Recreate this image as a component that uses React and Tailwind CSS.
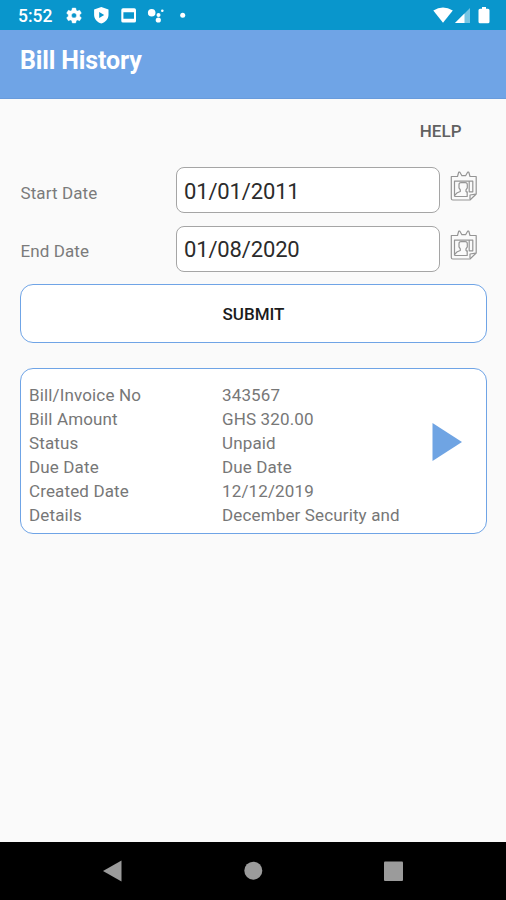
import React from "react";

function StatusIcons() {
  return (
    <svg className="ml-[14px] h-[30px] w-[124px]" viewBox="66 0 124 30" fill="white">
      <path
        fillRule="evenodd"
        d="M72.3 8h3.4l.5 2.2 1.3.8 2.2-.7 1.7 2.900-1.700 1.500v1.600l1.700 1.500-1.700 2.900-2.200-.7-1.300.8-.5 2.200h-3.400l-.5-2.200-1.300-.8-2.200.7-1.700-2.900 1.700-1.500v-1.600l-1.700-1.500 1.700-2.900 2.200.7 1.300-.8zM74 12.900a2.500 2.500 0 1 0 0 5 2.500 2.500 0 0 0 0-5z"
        stroke="white"
        strokeWidth=".4"
      />
      <path fillRule="evenodd" d="M101.300 7l7.200 2.600v5.100c0 4-3 7.500-7.200 8.800-4.200-1.300-7.200-4.800-7.200-8.800V9.600zM99.200 12v6l5-3z" />
      <path fillRule="evenodd" d="M123 8.200h11.300q1.700 0 1.700 1.700v11q0 1.700-1.700 1.700H123q-1.700 0-1.700-1.700v-11q0-1.700 1.700-1.700zM123.400 12.200v6.600H134V12.200z" />
      <circle cx="151.700" cy="12.800" r="3.800" />
      <circle cx="158.500" cy="15" r="2" />
      <circle cx="158.300" cy="20" r="2.600" />
      <circle cx="162.300" cy="10.700" r="1.300" />
      <circle cx="182.700" cy="15.300" r="2.500" />
    </svg>
  );
}

function SignalIcons() {
  return (
    <svg className="ml-auto h-[30px] w-[74px]" viewBox="432 0 74 30" fill="white">
      <path d="M433.300 10.500Q443 4.500 452.800 10.500L443 22.700z" />
      <path d="M470 8v15h-15z" opacity=".45" />
      <path d="M464.500 13.500V23H455z" />
      <path d="M482 7h4v1.800h2q1.500 0 1.500 1.500v11.400q0 1.500-1.500 1.500h-8q-1.500 0-1.500-1.500V10.300q0-1.500 1.500-1.500h2z" />
    </svg>
  );
}

function CalendarIcon() {
  return (
    <svg className="mt-[4px] ml-[9px] h-[32px] w-[30px]" viewBox="449 171 30 32" fill="none" stroke="#959595" strokeWidth="1.200" strokeLinejoin="round">
      <path d="M451.300 176.500h6.200l1.200-4.300h1.200l2 3.500h3.700l2-3.500h1.200l1.200 4.300h6.200v17.500l-6.200 6h-17.200q-1.500 0-1.500-1.500z" />
      <path d="M454.500 196.500v-15.300h18.300v10.600h-3.600v-10.600M454.500 196.500h12.700v-5" />
      <path d="M454.500 195.500l2.800-2.800 3-1.200v-1.600l-1.300-2v-3.200q0-2 2-2h4.300q2 0 2 2v3.200l-1.300 2v1.600l1.200.8" />
      <path d="M470 199.300v-4.300l5.700-.8" />
    </svg>
  );
}

function DateRow({ label, value }) {
  return (
    <div className="flex h-[46px]">
      <span className="w-[156px] pt-[13.500px] pl-[0.500px] text-[17px] leading-6 tracking-[0.100px] text-[#7b7b7b]">{label}</span>
      <div className="flex h-[46px] w-[264px] items-center rounded-[8px] border border-[#a5a5a5] bg-white pt-[2px] pl-[7px] text-[22px] tracking-[-0.150px] text-[#2b2b2b]">
        {value}
      </div>
      <CalendarIcon />
    </div>
  );
}

const bill = [
  ["Bill/Invoice No", "343567"],
  ["Bill Amount", "GHS 320.00"],
  ["Status", "Unpaid"],
  ["Due Date", "Due Date"],
  ["Created Date", "12/12/2019"],
  ["Details", "December Security and"],
];

export default function App() {
  return (
    <div className="flex h-[900px] w-[506px] flex-col overflow-hidden bg-[#fafafa] font-['Roboto',sans-serif]">
      <div className="flex h-[30px] shrink-0 items-center bg-[#0996cc] pl-[18px]">
        <span className="w-[34px] pt-[2px] text-[17.500px] font-medium whitespace-nowrap text-white">5:52</span>
        <StatusIcons />
        <SignalIcons />
      </div>
      <header className="h-[69px] shrink-0 border-b border-[#689bdc] bg-[#6fa4e6] pt-[15px] pl-5">
        <h1 className="text-[25px] leading-8 font-bold tracking-[-0.140px] text-white">Bill History</h1>
      </header>
      <main className="flex flex-1 flex-col px-5">
        <div className="mt-[20px] mr-[24.500px] self-end text-[17px] leading-6 font-medium text-[#616161]">HELP</div>
        <div className="mt-[24px] flex flex-col gap-[12.500px]">
          <DateRow label="Start Date" value="01/01/2011" />
          <DateRow label="End Date" value="01/08/2020" />
        </div>
        <button className="mt-[12.500px] h-[59px] w-[467px] rounded-[13px] border border-[#6fa4e6] bg-white pt-[2px] text-[17px] font-medium text-[#1b1b1b]">
          SUBMIT
        </button>
        <section className="mt-[25px] flex h-[166px] w-[467px] items-center rounded-[13px] border border-[#6fa4e6] bg-white pl-2">
          <dl className="grid w-[403px] grid-cols-[193px_1fr] pt-[7px] text-[17px] leading-6 tracking-[0.140px] text-[#777777]">
            {bill.map(([name, value]) => (
              <React.Fragment key={name}>
                <dt>{name}</dt>
                <dd>{value}</dd>
              </React.Fragment>
            ))}
          </dl>
          <svg className="mt-[-19px] h-[38px] w-[30px] shrink-0" viewBox="0 0 30 38">
            <path d="M0.500 0L30 19L0.500 38z" fill="#6fa4e3" />
          </svg>
        </section>
      </main>
      <nav className="h-[58px] shrink-0 bg-black">
        <svg className="block h-[58px] w-[506px]" viewBox="0 842 506 58" fill="#9b9b9b">
          <path d="M103 871L121.500 860.500V881.500z" />
          <circle cx="253.300" cy="870.700" r="9" />
          <rect x="384" y="861.500" width="19" height="19.500" rx="1" />
        </svg>
      </nav>
    </div>
  );
}
